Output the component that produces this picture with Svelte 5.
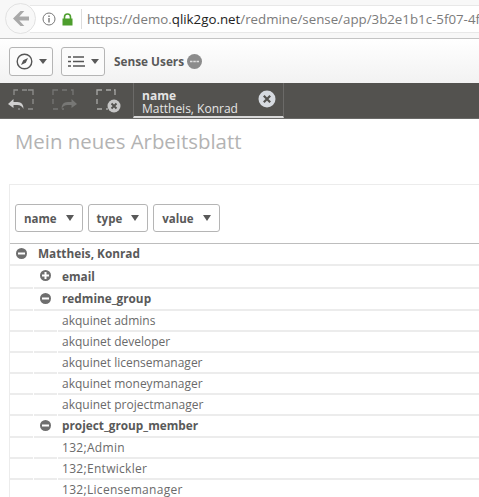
<script>
  const rows = [
    { depth: 0, text: 'Mattheis, Konrad', icon: 'minus', h: 22 },
    { depth: 1, text: 'email', icon: 'plus', h: 23 },
    { depth: 1, text: 'redmine_group', icon: 'minus', h: 22 },
    { depth: 2, text: 'akquinet admins', h: 21 },
    { depth: 2, text: 'akquinet developer', h: 21 },
    { depth: 2, text: 'akquinet licensemanager', h: 21 },
    { depth: 2, text: 'akquinet moneymanager', h: 21 },
    { depth: 2, text: 'akquinet projectmanager', h: 21 },
    { depth: 1, text: 'project_group_member', icon: 'minus', h: 22 },
    { depth: 2, text: '132;Admin', h: 21, num: true },
    { depth: 2, text: '132;Entwickler', h: 21, num: true },
    { depth: 2, text: '132;Licensemanager', h: 21, num: true }
  ];
</script>

<div class="page">
  <header class="browser">
    <div class="back">
      <svg width="16" height="15" viewBox="0 0 16 15"><path d="M7.500 0 0 7.500 7.500 15h3.800L6.300 9.500H16v-4H6.300L11.300 0z" fill="#a9a9a9"/></svg>
    </div>
    <svg class="info" width="14" height="14" viewBox="0 0 14 14"><circle cx="7" cy="7" r="6" fill="none" stroke="#777" stroke-width="1"/><rect x="6.300" y="6" width="1.400" height="4.500" fill="#777"/><rect x="6.300" y="3.500" width="1.400" height="1.500" fill="#777"/></svg>
    <svg class="lock" width="11" height="13" viewBox="0 0 11 13"><path d="M2.500 6V4a3 3 0 0 1 6 0v2" fill="none" stroke="#4d9e2d" stroke-width="1.600"/><rect x="0.500" y="5.500" width="10" height="7" fill="#4d9e2d"/></svg>
    <span class="sep"></span>
    <div class="url">https://demo.<b>qlik2go.net</b>/redmine/sense/app/3b2e1b1c-5f07-4f5</div>
  </header>

  <div class="tools">
    <button class="tool">
      <svg width="17" height="17" viewBox="0 0 17 17"><circle cx="8.500" cy="8.500" r="7.300" fill="none" stroke="#555" stroke-width="1.400"/><path d="M12 5 9.800 9.800 5 12l2.200-4.800z" fill="#555"/></svg>
      <i class="caret"></i>
    </button>
    <button class="tool">
      <svg width="17" height="11" viewBox="0 0 17 11"><path d="M0 1h3M5 1h11M0 5.500h3M5 5.500h11M0 10h3M5 10h12" stroke="#555" stroke-width="1.600"/></svg>
      <i class="caret"></i>
    </button>
    <span class="app">Sense Users</span>
    <svg width="15" height="15" viewBox="0 0 15 15"><circle cx="7.500" cy="7.500" r="7.500" fill="#8c8c8c"/><path d="M3 6.800h2.500v1.400H3zM6.300 6.800h2.500v1.400H6.300zM9.500 6.800H12v1.400H9.500z" fill="#e0e0e0"/></svg>
  </div>

  <div class="selbar">
    <div class="selicons">
      <svg width="28" height="22" viewBox="0 0 28 22"><path d="M6 6V1h4M14 1h5M20 1h5v5M25 10v5M25 20h-5M12 20h-2" fill="none" stroke="#8f8f8d" stroke-width="1.300"/><path d="M0 15l5.500-5v3h4q6 0 6 7-2-4-6-4h-4v3z" fill="#d0d0d0"/></svg>
      <svg width="28" height="22" viewBox="0 0 28 22"><path d="M5 6V1h5M14 1h5M25 6V1h-2M5 10v5M5 20h5M14 20h2" fill="none" stroke="#767674" stroke-width="1.300"/><path d="M29 15l-5.500-5v3h-4q-6 0-6 7 2-4 6-4h4v3z" fill="#777775"/></svg>
      <svg class="clear" width="28" height="24" viewBox="0 0 28 24"><path d="M1 6V1h5M10 1h5M19 6V1h-1M1 10v5M1 20h5M10 20h2" fill="none" stroke="#a9a9a7" stroke-width="1.300"/><circle cx="18" cy="17" r="6.500" fill="#c6c6c6"/><path d="M15.500 14.500l5 5M20.500 14.500l-5 5" stroke="#53524f" stroke-width="1.900"/></svg>
    </div>
    <div class="chip">
      <div class="chiptext">
        <b>name</b>
        <span>Mattheis, Konrad</span>
      </div>
      <svg class="chipx" width="18" height="18" viewBox="0 0 18 18"><circle cx="9" cy="9" r="8.500" fill="#d6dae0"/><path d="M5.800 5.800l6.400 6.400M12.200 5.800l-6.400 6.400" stroke="#53524f" stroke-width="2.200"/></svg>
    </div>
  </div>

  <main class="sheet">
    <h1>Mein neues Arbeitsblatt</h1>
    <section class="panel">
      <div class="heads">
        <button class="head">name <i class="caret dark"></i></button>
        <button class="head">type <i class="caret dark"></i></button>
        <button class="head">value <i class="caret dark"></i></button>
      </div>
      <div class="table">
        {#each rows as row}
          <div class="row" class:group={row.icon} class:num={row.num} style="height:{row.h}px">
            {#if row.depth > 0}<span class="cell c1"></span>{/if}
            {#if row.depth > 1}<span class="cell c2"></span>{/if}
            <div class="cell label">
              {#if row.icon}
                <svg width="11" height="11" viewBox="0 0 11 11"><circle cx="5.500" cy="5.500" r="5.500" fill="#6e6e6e"/><rect x="2" y="4.500" width="7" height="2" fill="#fff"/>{#if row.icon === 'plus'}<rect x="4.500" y="2" width="2" height="7" fill="#fff"/>{/if}</svg>
              {/if}
              <span>{row.text}</span>
            </div>
          </div>
        {/each}
      </div>
    </section>
  </main>
</div>

<style>
  :global(body) { margin: 0; background: #fff; overflow: hidden; }
  .page { width: 479px; height: 497px; overflow: hidden; font-family: "Open Sans", sans-serif; color: #595959; }
  button { font: inherit; padding: 0; background: none; cursor: pointer; }

  .browser { box-sizing: border-box; height: 39px; display: flex; align-items: center; background: #f8f8f8; border-bottom: 1px solid #c4c4c4; position: relative; padding-left: 42px; }
  .browser::before { content: ""; position: absolute; left: 30px; right: 0; top: 5px; height: 26px; background: #fff; border-top: 1px solid #e8e8e8; border-bottom: 1px solid #e8e8e8; }
  .back { position: absolute; left: 5px; top: 3px; width: 29px; height: 29px; border-radius: 50%; border: 1px solid #e2e2e2; background: #f8f8f8; display: flex; align-items: center; justify-content: center; }
  .info, .lock, .sep, .url { position: relative; flex: none; }
  .lock { margin: 0 0 0 6px; }
  .sep { width: 1px; height: 20px; background: #ddd; margin: 0 5px 0 8px; }
  .url { font-size: 13.300px; color: #7b7b7b; white-space: nowrap; }
  .url b { font-weight: 400; color: #222; }

  .tools { box-sizing: border-box; height: 44px; display: flex; align-items: center; padding-left: 9px; background: linear-gradient(#fff, #f2f2f2); }
  .tool { box-sizing: border-box; width: 44px; height: 29px; border: 1px solid #b5b5b5; border-radius: 3px; background: #fbfbfb; display: flex; align-items: center; justify-content: center; gap: 6px; margin-right: 8px; }
  .caret { width: 0; height: 0; border-left: 4px solid transparent; border-right: 4px solid transparent; border-top: 5px solid #595959; }
  .app { font-size: 11.800px; font-weight: 700; color: #595959; margin: 0 3px 0 1px; }

  .selbar { box-sizing: border-box; height: 36px; background: #53524f; display: flex; border-bottom: 1px solid #6a6a68; }
  .selicons { box-sizing: border-box; width: 133px; display: flex; gap: 12px; padding: 6px 0 0 8px; }
  .selicons svg { flex: none; overflow: visible; }
  .selicons .clear { margin-left: 8px; }
  .chip { box-sizing: border-box; width: 151px; height: 35px; border-left: 1px solid #6b6a68; border-right: 1px solid #6b6a68; border-bottom: 2px solid #d9d9d9; position: relative; padding: 6px 0 0 8px; color: #e6e6e6; font-size: 12px; line-height: 13px; }
  .chiptext { display: flex; flex-direction: column; }
  .chiptext b { color: #e4e4e4; }
  .chipx { position: absolute; right: 7px; top: 7px; }

  .sheet { padding: 0 0 0 9px; }
  h1 { margin: 0; font-size: 20.400px; font-weight: 400; color: #b3b3b3; height: 65px; padding: 8px 0 0 6px; line-height: 28px; box-sizing: border-box; }
  .panel { border-top: 1px solid #ececec; border-left: 1px solid #ececec; }
  .heads { display: flex; gap: 5px; padding: 19px 0 0 5px; height: 39px; border-bottom: 1px solid #bdbdbd; }
  .head { box-sizing: border-box; height: 28px; border: 1px solid #b5b5b5; border-radius: 3px; background: #fff; font-size: 11.500px; font-weight: 700; color: #595959; display: flex; align-items: center; gap: 9px; padding: 0 8px; }
  .dark { border-top-width: 6px; border-left-width: 4.500px; border-right-width: 4.500px; }

  .row { display: flex; box-sizing: border-box; }
  .cell { box-sizing: border-box; border-bottom: 2px solid #ececec; display: flex; align-items: center; }
  .c1, .c2 { width: 23px; margin-right: 1px; flex: none; }
  .label { flex: 1; gap: 11px; padding-left: 4px; font-size: 12px; color: #6a6a6a; white-space: nowrap; min-width: 0; }
  .group .label { font-size: 11.800px; font-weight: 700; color: #595959; padding-left: 6px; padding-bottom: 2px; }
  .num .label { letter-spacing: 0.300px; }
</style>
